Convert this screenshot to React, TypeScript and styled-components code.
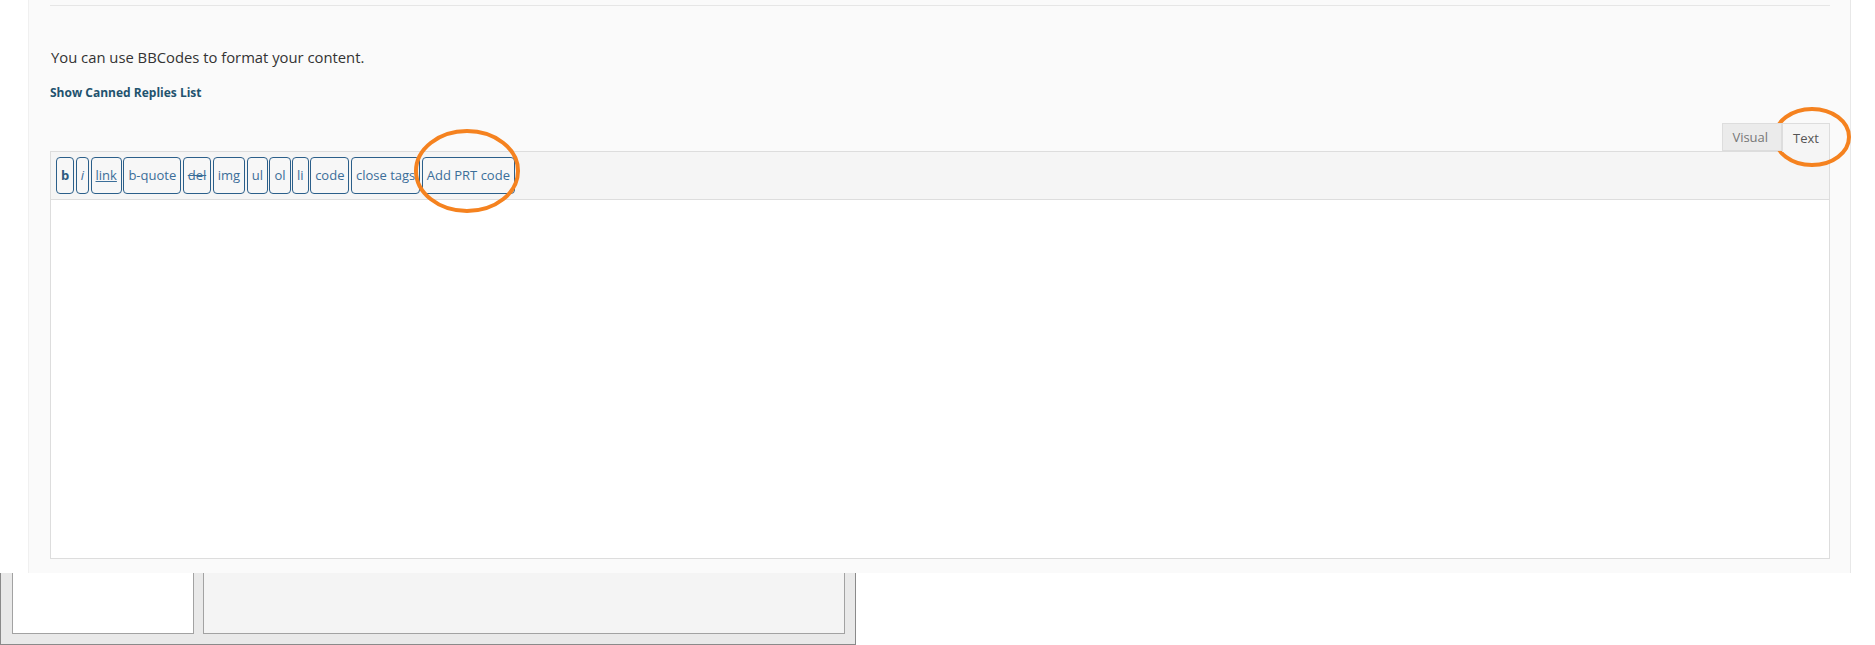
import styled, { createGlobalStyle } from 'styled-components';

const GlobalStyle = createGlobalStyle`
  html, body {
    margin: 0;
    padding: 0;
    background: #ffffff;
    font-family: "Open Sans", "Liberation Sans", sans-serif;
  }
`;

const Page = styled.div`
  width: 1875px;
  height: 645px;
  overflow: hidden;
  position: relative;
  background: #ffffff;
`;

const Panel = styled.div`
  margin-left: 28px;
  width: 1823px;
  height: 573px;
  box-sizing: border-box;
  background: #fafafa;
  border-left: 1px solid #f0f0f0;
  border-right: 1px solid #e8e8e8;
  padding: 5px 20px 0 21px;
`;

const Divider = styled.div`
  height: 1px;
  background: #e6e6e6;
`;

const Intro = styled.p`
  margin: 41px 0 0 1px;
  font-size: 14.8px;
  line-height: 20px;
  color: #333333;
`;

const CannedLink = styled.a`
  display: block;
  margin-top: 18px;
  font-size: 12px;
  font-weight: 700;
  line-height: 16px;
  color: #22526e;
  text-decoration: none;
`;

const Editor = styled.div`
  margin-top: 22px;
  display: flex;
  flex-direction: column;
`;

const Tabs = styled.div`
  display: flex;
  justify-content: flex-end;
  height: 28px;
`;

const Tab = styled.div<{ $active?: boolean }>`
  box-sizing: border-box;
  height: ${(p) => (p.$active ? '29px' : '28px')};
  margin-bottom: ${(p) => (p.$active ? '-1px' : '0')};
  padding: ${(p) => (p.$active ? '0 10px' : '0 13px 0 9px')};
  display: flex;
  align-items: center;
  font-size: 13px;
  color: ${(p) => (p.$active ? '#555555' : '#777777')};
  background: ${(p) => (p.$active ? '#f5f5f5' : '#ebebeb')};
  border: 1px solid #dddddd;
  border-bottom: ${(p) => (p.$active ? 'none' : '1px solid #dddddd')};
  position: relative;
  z-index: 1;
`;

const Toolbar = styled.div`
  box-sizing: border-box;
  height: 49px;
  display: flex;
  align-items: flex-start;
  gap: 1.5px;
  padding: 5px 0 0 5px;
  background: #f5f5f5;
  border: 1px solid #dddddd;
`;

const QButton = styled.button<{ $bold?: boolean; $italic?: boolean; $under?: boolean; $strike?: boolean }>`
  box-sizing: border-box;
  height: 37px;
  padding: 0 4px;
  margin: 0;
  font-family: "Open Sans", "Liberation Sans", sans-serif;
  font-size: 13px;
  line-height: 35px;
  color: ${(p) => (p.$bold ? '#2d5a80' : '#3b6e99')};
  background: #f7f7f7;
  border: 1px solid #2b5f8a;
  border-radius: 4px;
  white-space: nowrap;
  font-weight: ${(p) => (p.$bold ? 700 : 400)};
  font-style: ${(p) => (p.$italic ? 'italic' : 'normal')};
  text-decoration: ${(p) => (p.$under ? 'underline' : p.$strike ? 'line-through' : 'none')};
`;

const TextArea = styled.div`
  height: 359px;
  background: #ffffff;
  border: 1px solid #dddddd;
  border-top: none;
  box-sizing: border-box;
`;

const Window = styled.div`
  width: 856px;
  height: 72px;
  box-sizing: border-box;
  background: #e9e9e9;
  border: 1px solid #8a8a8a;
  border-top: none;
  display: flex;
  gap: 9px;
  padding: 0 10px 10px 11px;
`;

const Pane = styled.div<{ $white?: boolean }>`
  box-sizing: border-box;
  width: ${(p) => (p.$white ? '182px' : '643px')};
  background: ${(p) => (p.$white ? '#ffffff' : '#f4f4f4')};
  border: 1px solid #a2a2a2;
  border-top: none;
`;

const Annotation = styled.svg`
  position: absolute;
  overflow: visible;
  pointer-events: none;
`;

const buttons = [
  { label: 'b', bold: true },
  { label: 'i', italic: true },
  { label: 'link', under: true },
  { label: 'b-quote' },
  { label: 'del', strike: true },
  { label: 'img' },
  { label: 'ul' },
  { label: 'ol' },
  { label: 'li' },
  { label: 'code' },
  { label: 'close tags' },
  { label: 'Add PRT code' },
];

const Ring = ({ cx, cy, rx, ry }: { cx: number; cy: number; rx: number; ry: number }) => (
  <Annotation
    style={{ left: cx - rx - 3, top: cy - ry - 3 }}
    width={rx * 2 + 6}
    height={ry * 2 + 6}
  >
    <ellipse cx={rx + 3} cy={ry + 3} rx={rx} ry={ry} fill="none" stroke="#f5821f" strokeWidth={4} />
  </Annotation>
);

const App = () => {
  return (
    <Page>
      <GlobalStyle />
      <Panel>
        <Divider />
        <Intro>You can use BBCodes to format your content.</Intro>
        <CannedLink href="#">Show Canned Replies List</CannedLink>
        <Editor>
          <Tabs>
            <Tab>Visual</Tab>
            <Tab $active>Text</Tab>
          </Tabs>
          <Toolbar>
            {buttons.map((b) => (
              <QButton
                key={b.label}
                $bold={b.bold}
                $italic={b.italic}
                $under={b.under}
                $strike={b.strike}
              >
                {b.label}
              </QButton>
            ))}
          </Toolbar>
          <TextArea />
        </Editor>
      </Panel>
      <Window>
        <Pane $white />
        <Pane />
      </Window>
      <Ring cx={467} cy={171} rx={51} ry={40} />
      <Ring cx={1812} cy={137} rx={37} ry={28} />
    </Page>
  );
};

export default App;
